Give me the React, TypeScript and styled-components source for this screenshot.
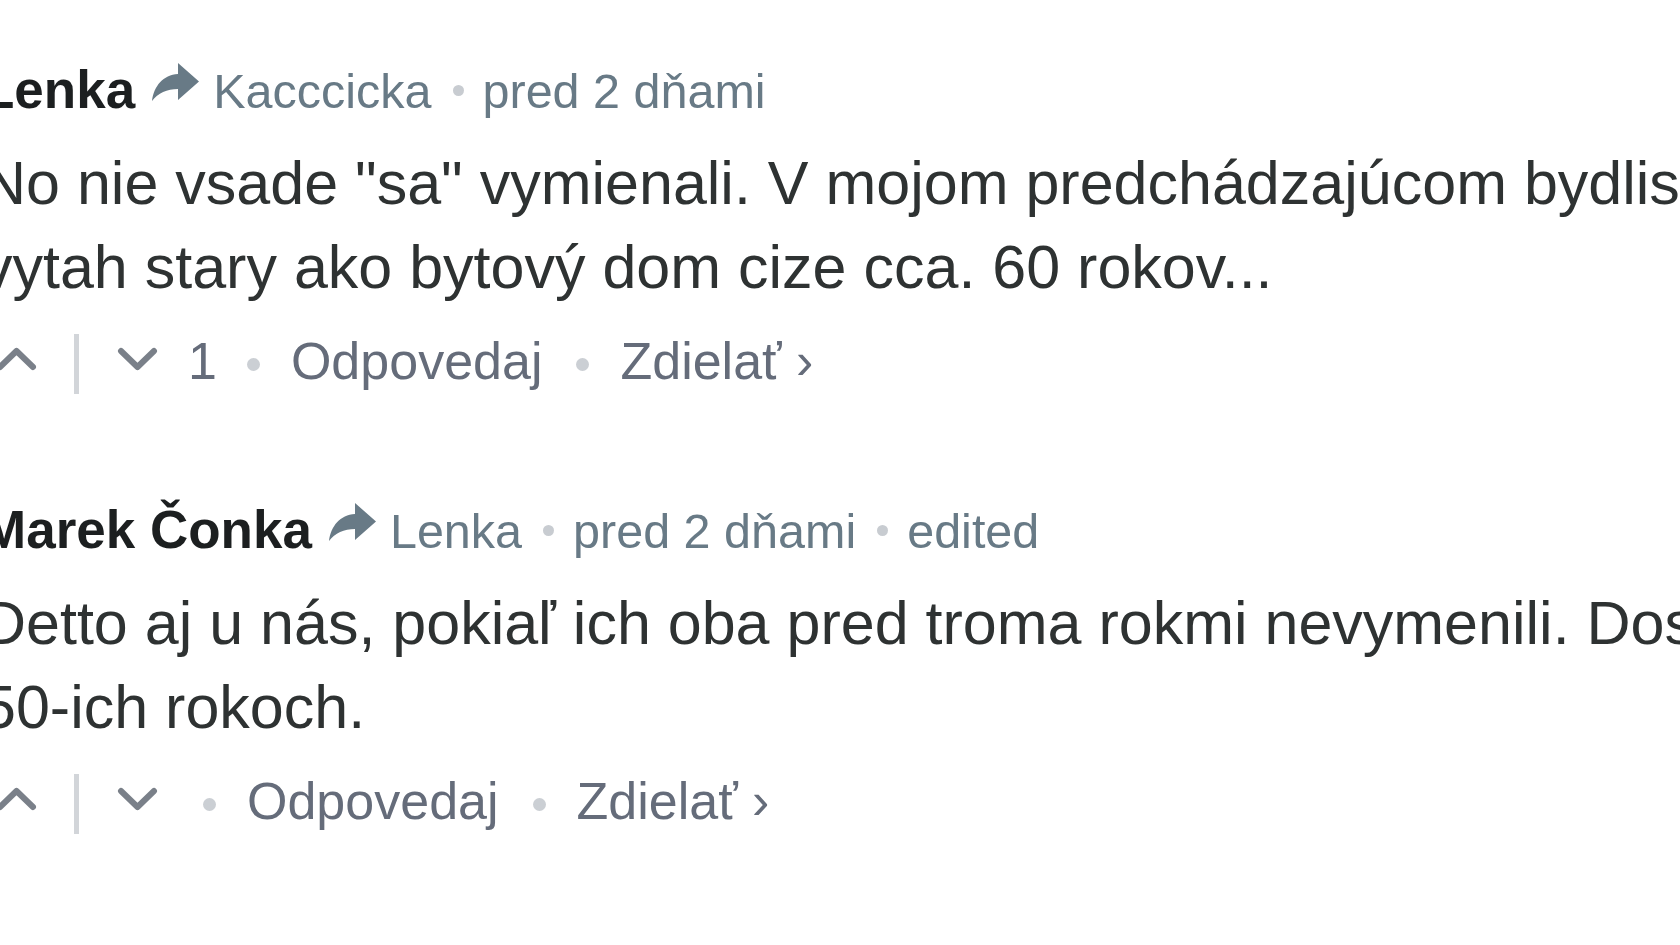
import React from "react";
import styled, { createGlobalStyle } from "styled-components";

const GlobalStyle = createGlobalStyle`
  html, body {
    margin: 0;
    padding: 0;
    background: #ffffff;
    overflow: hidden;
  }
  body {
    font-family: "Liberation Sans", Arial, Helvetica, sans-serif;
  }
`;

const Page = styled.div`
  display: flex;
  flex-direction: column;
  padding-top: 54px;
  margin-left: -18px;
  width: 2400px;
`;

const Comment = styled.article<{ $gap?: number }>`
  display: flex;
  flex-direction: column;
  margin-top: ${(p) => p.$gap ?? 0}px;
`;

const Byline = styled.div`
  height: 72px;
  line-height: 72px;
  font-size: 53px;
  white-space: nowrap;
`;

const Author = styled.span`
  font-weight: 700;
  color: #1c1f20;
`;

const ParentLink = styled.span`
  margin-left: 16px;
  font-size: 48.5px;
  color: #687a86;
`;

const ArrowSvg = styled.svg`
  width: 48px;
  height: 40px;
  vertical-align: 6px;
  margin-right: 14px;
`;

const MetaDot = styled.span`
  display: inline-block;
  width: 11px;
  height: 11px;
  border-radius: 50%;
  background: #c8ccd1;
  margin: 0 19px 0 21px;
  vertical-align: 12px;
`;

const Meta = styled.span`
  font-size: 48.5px;
  color: #687a86;
`;

const Body = styled.div`
  margin-top: 15px;
  font-size: 61px;
  line-height: 84px;
  color: #2e3232;
`;

const Line = styled.span`
  display: block;
  white-space: nowrap;
`;

const Actions = styled.div`
  margin-top: 25px;
  display: flex;
  align-items: center;
  height: 60px;
  font-size: 52px;
  line-height: 60px;
  color: #656c7a;
  white-space: nowrap;
`;

const VoteGroup = styled.div`
  display: flex;
  align-items: center;
  height: 60px;
  padding-right: 11px;
`;

const Chevron = styled.svg<{ $first?: boolean }>`
  width: 41px;
  height: 24px;
  margin-left: ${(p) => (p.$first ? 14 : 38)}px;
  margin-bottom: 11px;
  flex: none;
`;

const VoteDivider = styled.span`
  width: 5px;
  height: 60px;
  background: #d2d5d9;
  margin-left: 37px;
  flex: none;
`;

const Count = styled.span`
  margin-left: 19px;
  margin-right: -4px;
  margin-bottom: 6px;
`;

const ActionDot = styled.span`
  width: 13px;
  height: 13px;
  border-radius: 50%;
  background: #cbcfd4;
  margin: 0 31px 0 34px;
  flex: none;
`;

const ActionLink = styled.span`
  color: #656c7a;
  margin-bottom: 6px;
`;

const ReplyArrow = () => (
  <ArrowSvg viewBox="0 0 48 40" aria-hidden="true">
    <path
      d="M27 1 L48 19.5 L27 38 L27 27 C16 27 7 31 1 39 C3 24 12 13 27 12 Z"
      fill="#687a86"
    />
  </ArrowSvg>
);

const Up = () => (
  <Chevron $first viewBox="0 0 41 24" aria-hidden="true">
    <polyline
      points="4,20 20.5,4 37,20"
      fill="none"
      stroke="#7a8089"
      strokeWidth="6"
      strokeLinecap="round"
      strokeLinejoin="round"
    />
  </Chevron>
);

const Down = () => (
  <Chevron viewBox="0 0 41 24" aria-hidden="true">
    <polyline
      points="4,4 20.5,20 37,4"
      fill="none"
      stroke="#7a8089"
      strokeWidth="6"
      strokeLinecap="round"
      strokeLinejoin="round"
    />
  </Chevron>
);

type Post = {
  author: string;
  parent: string;
  time: string;
  edited?: boolean;
  lines: string[];
  votes?: number;
  gap?: number;
};

const posts: Post[] = [
  {
    author: "Lenka",
    parent: "Kacccicka",
    time: "pred 2 dňami",
    lines: [
      'No nie vsade "sa" vymienali. V mojom predchádzajúcom bydlisku bol',
      "vytah stary ako bytový dom cize cca. 60 rokov...",
    ],
    votes: 1,
  },
  {
    author: "Marek Čonka",
    parent: "Lenka",
    time: "pred 2 dňami",
    edited: true,
    lines: [
      "Detto aj u nás, pokiaľ ich oba pred troma rokmi nevymenili. Dostali sme ich v",
      "50-ich rokoch.",
    ],
    gap: 100,
  },
];

export default function App() {
  return (
    <>
      <GlobalStyle />
      <Page>
        {posts.map((p) => (
          <Comment key={p.author} $gap={p.gap}>
            <Byline>
              <Author>{p.author}</Author>
              <ParentLink>
                <ReplyArrow />
                {p.parent}
              </ParentLink>
              <MetaDot />
              <Meta>{p.time}</Meta>
              {p.edited && (
                <>
                  <MetaDot />
                  <Meta>edited</Meta>
                </>
              )}
            </Byline>
            <Body>
              {p.lines.map((l, i) => (
                <Line key={i}>{l}</Line>
              ))}
            </Body>
            <Actions>
              <VoteGroup>
                <Up />
                <VoteDivider />
                <Down />
              </VoteGroup>
              {p.votes !== undefined && <Count>{p.votes}</Count>}
              <ActionDot />
              <ActionLink>Odpovedaj</ActionLink>
              <ActionDot />
              <ActionLink>Zdielať ›</ActionLink>
            </Actions>
          </Comment>
        ))}
      </Page>
    </>
  );
}
